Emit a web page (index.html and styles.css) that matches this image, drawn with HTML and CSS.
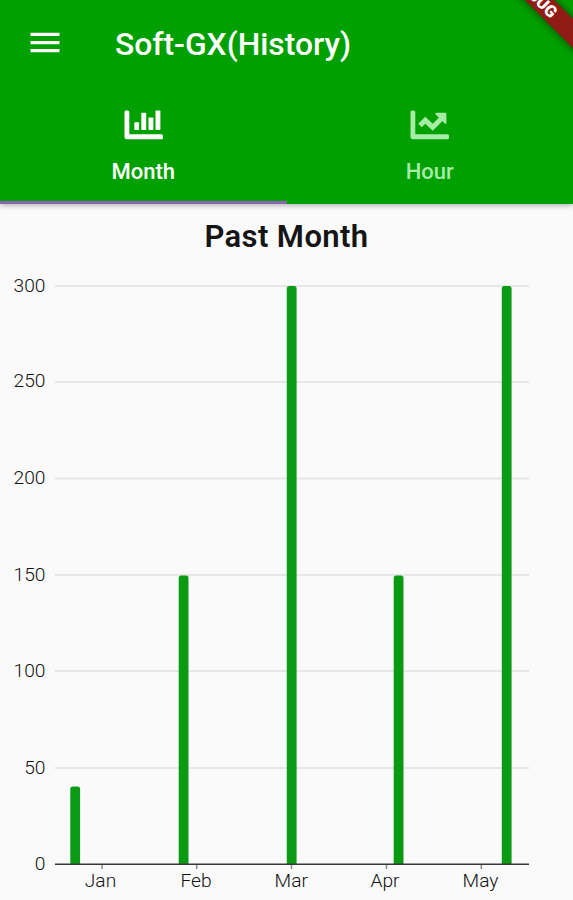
FILE: index.html
```html
<!DOCTYPE html>
<html lang="en">
<head>
  <meta charset="UTF-8" />
  <meta name="viewport" content="width=device-width, initial-scale=1.0"/>
  <title>Soft-GX(History)</title>
  <link rel="stylesheet" href="styles.css">
</head>
<body>
<header class="app-bar">
  <div class="toolbar">
    <svg class="menu-icon" width="30" height="22" viewBox="0 0 30 22">
      <path d="M0.5 2.3H29.5M0.5 10.6H29.5M0.5 18.6H29.5" stroke="#fff" stroke-width="3.2"/>
    </svg>
    <h1>Soft-GX(History)</h1>
  </div>
  <nav class="tabs">
    <div class="tab active">
      <svg width="40" height="30" viewBox="0 0 40 30" fill="currentColor">
        <path d="M2 0.5h1.8q1.5 0 1.5 1.5v22.3h32.2q1.5 0 1.5 1.5v1.9q0 1.5-1.5 1.5H3q-2.5 0-2.5-2.5V2q0-1.5 1.5-1.5z"/>
        <rect x="10.3" y="12.3" width="4.8" height="7.6" rx="0.7"/>
        <rect x="17.3" y="2.8" width="4.9" height="17.1" rx="0.7"/>
        <rect x="24.5" y="7.6" width="4.9" height="12.3" rx="0.7"/>
        <rect x="31.5" y="0.5" width="4.9" height="19.4" rx="0.7"/>
      </svg>
      <span>Month</span>
    </div>
    <div class="tab">
      <svg width="40" height="30" viewBox="0 0 40 30" fill="currentColor">
        <path d="M2 0.5h1.8q1.5 0 1.5 1.5v22.3h32.2q1.5 0 1.5 1.5v1.9q0 1.5-1.5 1.5H3q-2.5 0-2.5-2.5V2q0-1.5 1.5-1.5z"/>
        <path d="M10 15.6L15.3 10.3L22.7 17.2L31.5 8.4" fill="none" stroke="currentColor" stroke-width="5" stroke-linejoin="miter"/>
        <path d="M26.4 2.8H35.2q1.2 0 1.2 1.2V12.8q0 1.9-1.5 0.7L25.6 4.6q-1.2-1.3 0.8-1.8z"/>
      </svg>
      <span>Hour</span>
    </div>
  </nav>
  <svg class="debug-banner" width="80" height="80" viewBox="0 0 80 80">
    <g transform="translate(61.5 15) rotate(45)">
      <rect class="ribbon" x="-80" y="-10.3" width="160" height="20.6" fill="#911c16"/>
      <text x="0" y="5.6" text-anchor="end">DEBUG</text>
    </g>
  </svg>
</header>

<main>
  <h2>Past Month</h2>
  <svg class="chart" width="573" height="640" viewBox="0 260 573 640">
    <g class="grid">
      <path d="M55 286H529M55 382H529M55 478.5H529M55 575H529M55 671H529M55 768H529"/>
    </g>
    <g class="bars">
      <path d="M70.3 864V789q0-2.5 2.5-2.5h4.8q2.5 0 2.5 2.5V864z"/>
      <path d="M178.7 864V578q0-2.5 2.5-2.5h4.8q2.5 0 2.5 2.5V864z"/>
      <path d="M286.8 864V288.5q0-2.5 2.5-2.5h4.8q2.5 0 2.5 2.5V864z"/>
      <path d="M393.7 864V578q0-2.5 2.5-2.5h4.8q2.5 0 2.5 2.5V864z"/>
      <path d="M501.8 864V288.5q0-2.5 2.5-2.5h4.8q2.5 0 2.5 2.5V864z"/>
    </g>
    <path class="ticks" d="M102 864V869M196.7 864V869M291.5 864V869M386.5 864V869M481.3 864V869"/>
    <path class="axis" d="M55 864.3H529"/>
    <g class="y-labels">
      <text x="45.5" y="292">300</text>
      <text x="45.5" y="387">250</text>
      <text x="45.5" y="484">200</text>
      <text x="45.5" y="581">150</text>
      <text x="45.5" y="677">100</text>
      <text x="45.5" y="773.5">50</text>
      <text x="45.5" y="870">0</text>
    </g>
    <g class="x-labels">
      <text x="100.5" y="886.5">Jan</text>
      <text x="196" y="886.5">Feb</text>
      <text x="291.3" y="886.5">Mar</text>
      <text x="385" y="886.5">Apr</text>
      <text x="480.5" y="886.5">May</text>
    </g>
  </svg>
</main>
</body>
</html>
```

FILE: styles.css
```css
body {
  margin: 0;
  background-color: #fafafa;
  font-family: Roboto, "Liberation Sans", Arial, sans-serif;
  color: #151515;
  overflow: hidden;
}

.app-bar {
  position: relative;
  height: 204px;
  background-color: #00a000;
  color: #fff;
  box-shadow: 0 1px 6px rgba(0, 0, 0, 0.35);
}

.toolbar {
  display: flex;
  align-items: center;
  height: 88px;
  padding-left: 30px;
}

.menu-icon {
  margin-right: 55px;
  margin-top: -2px;
}

h1 {
  margin: 0;
  font-size: 31.8px;
  font-weight: 500;
  line-height: 40px;
}

.tabs {
  display: flex;
  height: 116px;
}

.tab {
  flex: 1;
  box-sizing: border-box;
  display: flex;
  flex-direction: column;
  align-items: center;
  padding-top: 22px;
  border-bottom: 3px solid transparent;
  color: #a6eca6;
  font-size: 22px;
  font-weight: 500;
}

.tab svg {
  margin-left: 1px;
}

.tab span {
  margin-top: 19px;
  line-height: 26px;
}

.tab.active {
  border-bottom-color: #8d62b5;
  color: #fff;
}

.debug-banner {
  position: absolute;
  top: 0;
  right: 0;
}

.debug-banner text {
  fill: #fff;
  font-size: 16.5px;
  font-weight: 900;
}

.ribbon {
  filter: drop-shadow(0 0 4px rgba(0, 0, 0, 0.6));
}

h2 {
  margin: 0;
  height: 56px;
  font-size: 31px;
  font-weight: 600;
  line-height: 66px;
  text-align: center;
  letter-spacing: 0.4px;
}

.chart {
  display: block;
}

.grid {
  stroke: #e6e6e6;
  stroke-width: 2;
}

.bars {
  fill: #0a9a14;
}

.ticks {
  stroke: #8a8a8a;
  stroke-width: 1.5;
}

.axis {
  stroke: #383838;
  stroke-width: 1.6;
}

.y-labels,
.x-labels {
  fill: #111;
  font-size: 19.2px;
  font-weight: 300;
}

.y-labels {
  text-anchor: end;
}

.x-labels {
  text-anchor: middle;
}
```
